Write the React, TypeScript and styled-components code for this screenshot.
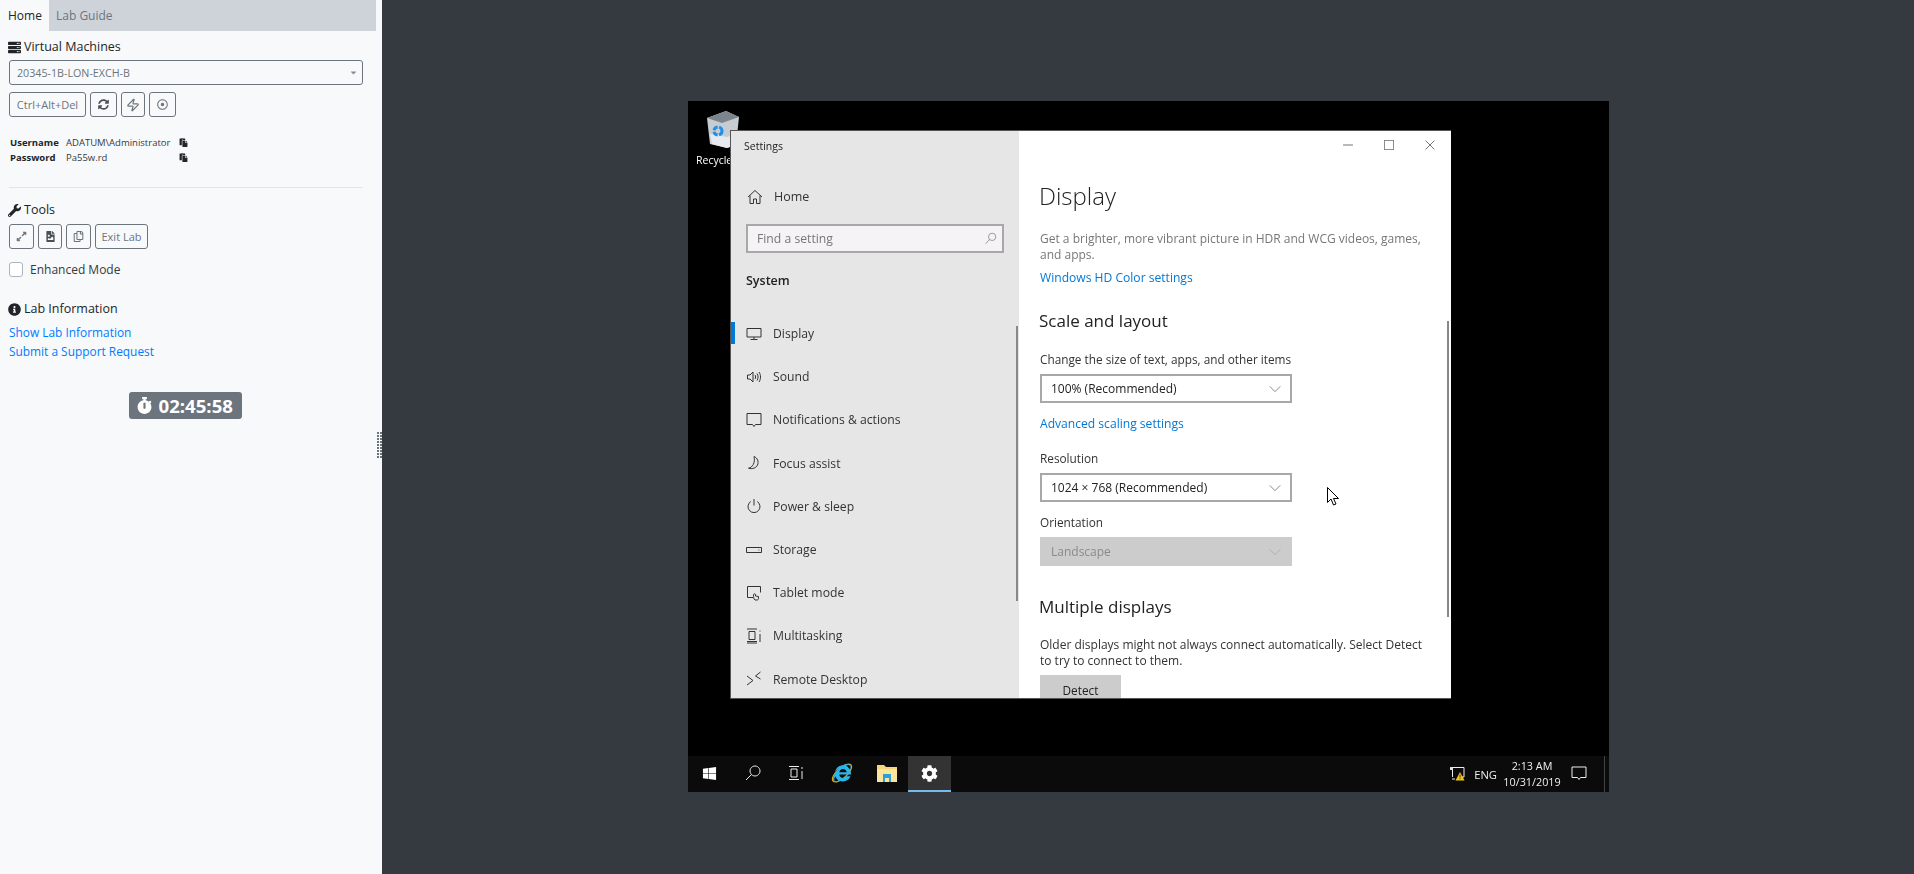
import React from "react";
import styled, { createGlobalStyle } from "styled-components";
import {
  FaServer,
  FaWrench,
  FaInfoCircle,
  FaStopwatch,
  FaSyncAlt,
  FaRegDotCircle,
  FaExpandAlt,
  FaFileImage,
  FaRegCopy,
  FaPaste,
  FaCog,
  FaWindows,
  FaCaretDown,
  FaInternetExplorer,
} from "react-icons/fa";
import { Zap } from "lucide-react";

const GlobalStyle = createGlobalStyle`
  html, body {
    margin: 0;
    height: 100%;
    overflow: hidden;
    background: #343a40;
    font-family: "Open Sans", "Noto Sans", sans-serif;
  }
  * { box-sizing: border-box; }
`;

const Page = styled.div`
  display: flex;
  width: 1914px;
  height: 874px;
`;

/* ---------- left panel ---------- */

const Sidebar = styled.aside`
  position: relative;
  width: 382px;
  flex: none;
  background: #f8f9fa;
  color: #212529;
`;

const Tabs = styled.nav`
  display: flex;
  width: 376px;
  height: 31px;
  background: #ced3da;
`;

const Tab = styled.div<{ $active?: boolean }>`
  width: ${(p) => (p.$active ? "49px" : "auto")};
  padding-left: ${(p) => (p.$active ? "8px" : "7px")};
  line-height: 31px;
  font-size: 12px;
  color: ${(p) => (p.$active ? "#212529" : "#6c757d")};
  background: ${(p) => (p.$active ? "#f8f9fa" : "transparent")};
`;

const SideBody = styled.div`
  display: flex;
  flex-direction: column;
  padding: 0 19px 0 9px;
`;

const Heading = styled.h6<{ $top: number }>`
  display: flex;
  align-items: center;
  gap: 3px;
  margin: ${(p) => p.$top}px 0 0 -1px;
  font-size: 12.5px;
  font-weight: 500;
  line-height: 18px;
  color: #212529;
  svg {
    font-size: 13px;
  }
`;

const SelectBox = styled.div`
  display: flex;
  align-items: center;
  justify-content: space-between;
  height: 25px;
  margin-top: 4px;
  padding: 0 4px 0 7px;
  border: 1px solid #6c757d;
  border-radius: 3px;
  font-size: 10.7px;
  color: #6c757d;
  svg {
    font-size: 9px;
    color: #868e96;
  }
`;

const ButtonRow = styled.div<{ $top: number }>`
  display: flex;
  gap: 4px;
  margin-top: ${(p) => p.$top}px;
`;

const ToolButton = styled.div<{ $w: number }>`
  display: flex;
  align-items: center;
  justify-content: center;
  width: ${(p) => p.$w}px;
  height: 25px;
  border: 1px solid #6c757d;
  border-radius: 3px;
  font-size: 11px;
  color: #6c757d;
  svg {
    font-size: 11px;
  }
`;

const DarkToolButton = styled(ToolButton)`
  color: #495057;
`;

const Creds = styled.div`
  display: grid;
  grid-template-columns: 56px 113px auto;
  margin: 18px 0 0 1px;
  font-size: 9.5px;
  line-height: 15px;
  color: #343a40;
`;

const CredLabel = styled.span`
  font-weight: 700;
  color: #212529;
`;

const CredCopy = styled.span`
  display: flex;
  align-items: center;
  font-size: 9px;
  color: #212529;
`;

const Divider = styled.hr`
  width: 100%;
  margin: 22px 0 0;
  border: 0;
  border-top: 1px solid #e1e4e8;
`;

const CheckRow = styled.label`
  display: flex;
  align-items: center;
  gap: 7px;
  height: 15px;
  margin-top: 13px;
  font-size: 12px;
  color: #343a40;
`;

const CheckBox = styled.span`
  width: 14px;
  height: 15px;
  background: #fff;
  border: 1px solid #adb5bd;
  border-radius: 3px;
`;

const SideLinks = styled.div`
  display: flex;
  flex-direction: column;
  margin: 5px 0 0;
`;

const SideLink = styled.a`
  font-size: 11.9px;
  line-height: 18.5px;
  color: #007bff;
`;

const TimerWrap = styled.div`
  display: flex;
  justify-content: center;
  margin-top: 32px;
  padding-right: 2px;
`;

const Timer = styled.div`
  display: flex;
  align-items: center;
  gap: 6px;
  width: 113px;
  height: 27px;
  padding-left: 7px;
  background: #6c757d;
  border-radius: 3px;
  color: #fff;
  font-size: 18.6px;
  font-weight: 700;
  svg {
    font-size: 17px;
  }
`;

const Grip = styled.div`
  position: absolute;
  right: 0;
  top: 432px;
  display: grid;
  grid-template-columns: repeat(2, 2px);
  gap: 1px;
  span {
    width: 2px;
    height: 2px;
    background: #6c757d;
  }
`;

/* ---------- remote desktop ---------- */

const Stage = styled.main`
  flex: 1;
  display: flex;
  justify-content: flex-start;
  padding: 101px 0 0 306px;
`;

const Screen = styled.div`
  display: flex;
  flex-direction: column;
  width: 921px;
  height: 691px;
  background: #000;
  filter: blur(0.3px);
  font-family: "Open Sans", "Noto Sans", sans-serif;
`;

const Desktop = styled.div`
  position: relative;
  flex: 1;
`;

const DesktopIcon = styled.div`
  position: absolute;
  left: 8px;
  top: 9px;
  display: flex;
  flex-direction: column;
  align-items: flex-start;
  gap: 5px;
  color: #fff;
  font-size: 10.5px;
  svg {
    margin-left: 9px;
  }
`;

const Win = styled.section`
  position: absolute;
  left: 42px;
  top: 29px;
  display: flex;
  width: 721px;
  height: 569px;
  overflow: hidden;
  background: #fff;
  border-top: 1px solid #555;
  border-bottom: 1px solid #555;
  border-left: 1px solid #555;
`;

const Pane = styled.div`
  position: relative;
  flex: none;
  width: 288px;
  background: #e6e6e6;
  color: #333;
`;

const WinTitle = styled.div`
  height: 31px;
  padding-left: 13px;
  font-size: 10.5px;
  line-height: 31px;
  color: #222;
`;

const HomeRow = styled.div`
  display: flex;
  align-items: center;
  height: 43px;
  margin-top: 13px;
  padding-left: 16px;
  font-size: 12.5px;
  color: #333;
  svg {
    margin-right: 11px;
  }
`;

const SearchBox = styled.div`
  display: flex;
  align-items: center;
  justify-content: space-between;
  width: 258px;
  height: 29px;
  margin: 6px 0 0 15px;
  padding: 0 5px 0 9px;
  background: #f5f3f6;
  border: 2px solid #a8a8a8;
  font-size: 12.2px;
  color: #777;
  svg {
    color: #888;
  }
`;

const SysLabel = styled.div`
  margin: 17px 0 0 15px;
  font-size: 12.5px;
  font-weight: 600;
  line-height: 22px;
  color: #222;
`;

const NavList = styled.ul`
  margin: 20px 0 0;
  padding: 0;
  list-style: none;
`;

const NavRow = styled.li<{ $active?: boolean }>`
  position: relative;
  display: flex;
  align-items: center;
  gap: 11px;
  height: 43.2px;
  padding-left: 15px;
  font-size: 12.2px;
  color: #333;
  &::before {
    content: "";
    display: ${(p) => (p.$active ? "block" : "none")};
    position: absolute;
    left: 0;
    top: 10px;
    width: 4px;
    height: 22px;
    background: #0078d7;
  }
`;

const PaneScroll = styled.div`
  position: absolute;
  right: 1px;
  top: 195px;
  width: 2px;
  height: 275px;
  background: #888;
`;

const Content = styled.div`
  position: relative;
  flex: 1;
  padding-left: 21px;
  color: #222;
`;

const Caption = styled.div`
  display: flex;
  justify-content: flex-end;
  height: 28px;
  margin-left: -21px;
  padding-right: 1px;
`;

const CaptionBtn = styled.div`
  display: flex;
  align-items: center;
  justify-content: center;
  width: 41px;
  color: #222;
`;

const PageTitle = styled.h1`
  margin: 19px 0 0 -1px;
  font-size: 24px;
  font-weight: 300;
  line-height: 36px;
  color: #222;
`;

const Muted = styled.p`
  width: 392px;
  margin: 17px 0 0;
  font-size: 12px;
  line-height: 16px;
  color: #777;
`;

const WinLink = styled.a<{ $top: number }>`
  display: block;
  margin-top: ${(p) => p.$top}px;
  font-size: 12.1px;
  line-height: 18px;
  color: #0078d7;
`;

const SubTitle = styled.h2<{ $top: number }>`
  margin: ${(p) => p.$top}px 0 0 -1px;
  font-size: 17px;
  font-weight: 400;
  line-height: 26px;
  color: #222;
`;

const FieldLabel = styled.div<{ $top: number }>`
  margin-top: ${(p) => p.$top}px;
  font-size: 11.8px;
  line-height: 18px;
  color: #333;
`;

const Dropdown = styled.div<{ $disabled?: boolean }>`
  display: flex;
  align-items: center;
  justify-content: space-between;
  width: 252px;
  height: 29px;
  margin-top: 6px;
  padding: 0 8px 0 9px;
  font-size: 12px;
  background: ${(p) => (p.$disabled ? "#ccc" : "#fff")};
  border: 2px solid ${(p) => (p.$disabled ? "#ccc" : "#a8a8a8")};
  color: ${(p) => (p.$disabled ? "#8a8a8a" : "#222")};
  svg {
    color: ${(p) => (p.$disabled ? "#aaa" : "#777")};
  }
`;

const BodyText = styled.p`
  width: 392px;
  margin: 17px 0 0;
  font-size: 12px;
  line-height: 16px;
  color: #333;
`;

const DetectBtn = styled.div`
  display: flex;
  align-items: center;
  justify-content: center;
  width: 81px;
  height: 29px;
  margin-top: 6px;
  background: #ccc;
  font-size: 11.8px;
  color: #222;
`;

const ContentScroll = styled.div`
  position: absolute;
  right: 2px;
  top: 190px;
  width: 2px;
  height: 296px;
  background: #888;
`;

const Pointer = styled.svg`
  position: absolute;
  left: 639px;
  top: 386px;
`;

const Taskbar = styled.footer`
  display: flex;
  align-items: stretch;
  height: 36px;
  background: #0b0b0b;
  color: #eee;
`;

const TaskSlot = styled.div<{ $w: number; $active?: boolean }>`
  display: flex;
  align-items: center;
  justify-content: center;
  width: ${(p) => p.$w}px;
  background: ${(p) => (p.$active ? "#333" : "transparent")};
  border-bottom: 2px solid ${(p) => (p.$active ? "#76b9ed" : "transparent")};
`;

const TaskSpacer = styled.div`
  flex: 1;
`;

const Lang = styled.div`
  display: flex;
  align-items: center;
  padding: 0 2px 0 9px;
  font-size: 11.2px;
`;

const Clock = styled.div`
  display: flex;
  flex-direction: column;
  align-items: center;
  justify-content: center;
  width: 66px;
  font-size: 10.8px;
  line-height: 16px;
`;

const ShowDesktop = styled.div`
  width: 1px;
  margin: 0 4px 0 12px;
  background: #444;
`;

/* ---------- drawn icons ---------- */

const Line = ({ d, size = 16 }: { d: string; size?: number }) => (
  <svg width={size} height={size} viewBox="0 0 16 16" fill="none" stroke="currentColor" strokeWidth="1">
    <path d={d} />
  </svg>
);

const navIcons: Record<string, string> = {
  display: "M1 2.500h14v8.500H1zM8 11v2.500M4.500 13.500h7",
  sound: "M1.500 6h2.500l3-3v10l-3-3H1.500zM9 6c.8 1.200.8 2.800 0 4M11 4.500c1.400 2 1.400 5 0 7M13 3c2 2.800 2 7.200 0 10",
  notify: "M1 1.500h14v11H9.500L8 14.500 6.500 12.500H1z",
  focus: "M8 1.500c3.500 1.500 5 5 3.500 8.500-1.200 2.800-5 4.500-9 3.200 4-.5 7-5.700 5.500-11.700z",
  power: "M8 1v6.500M4.800 3.500a6 6 0 1 0 6.400 0",
  storage: "M.5 5.500h15v5H.5zM12.500 8h.8",
  tablet: "M7 12.500H1.500V1.500h13v6M9 15c-1.500-1-1.500-3-1.500-5 0-1.500 2-1.500 2-.5V11l3 .5V13c0 1-.5 2-1 2z",
  multi: "M1 1h10M1 15h10M3 3.500h6v8H3zM1 13.500h10M14 2.500v1M14 6v8",
  remote: "M1 5l6 4.500-6 4.500M14.500 1L9.500 5l5 3",
};

const NAV = [
  { key: "display", label: "Display", active: true },
  { key: "sound", label: "Sound" },
  { key: "notify", label: "Notifications & actions" },
  { key: "focus", label: "Focus assist" },
  { key: "power", label: "Power & sleep" },
  { key: "storage", label: "Storage" },
  { key: "tablet", label: "Tablet mode" },
  { key: "multi", label: "Multitasking" },
  { key: "remote", label: "Remote Desktop" },
];

const Chevron = () => <Line size={14} d="M2 5l6 6 6-6" />;

const RecycleBin = () => (
  <svg width="36" height="38" viewBox="0 0 36 38">
    <path d="M2 8L21 1l13 6-3 28-9 3-17-4z" fill="#c6ccd2" />
    <path d="M2 8l19-7 13 6-17 6z" fill="#7d858c" />
    <path d="M5 24l17 3 9-3-1 11-8 3-15-4z" fill="#e6eaee" />
    <circle cx="13" cy="21" r="4" fill="none" stroke="#1f8fe8" strokeWidth="3" strokeDasharray="5 1.500" />
  </svg>
);

const IEIcon = () => (
  <svg width="22" height="22" viewBox="0 0 22 22">
    <ellipse cx="11" cy="11" rx="12" ry="5" fill="none" stroke="#d9a520" strokeWidth="1.300" transform="rotate(-42 11 11)" />
    <foreignObject x="2" y="2" width="18" height="18">
      <FaInternetExplorer size={18} color="#29b6ec" />
    </foreignObject>
  </svg>
);

const FolderIcon = () => (
  <svg width="20" height="18" viewBox="0 0 20 18">
    <path d="M0 1h7l2 2h11v15H0z" fill="#f7d774" />
    <path d="M0 5h20v13H0z" fill="#fbe59a" />
    <path d="M6 10h8v8H6z" fill="#2aa0dc" />
    <path d="M8 14h4v4H8z" fill="#fbe59a" />
  </svg>
);

const NetworkIcon = () => (
  <svg width="16" height="15" viewBox="0 0 16 15">
    <path d="M2 1.500h13v9.500H9" fill="none" stroke="#eee" />
    <path d="M1 1h3v3H1z" fill="#ddd" />
    <path d="M3.500 4v7M3 13h3" stroke="#eee" fill="none" />
    <path d="M11 6l4.500 8.500h-9z" fill="#f5c518" />
    <path d="M10.700 8.500h.7v3h-.7zM10.700 12.300h.7v1h-.7z" fill="#000" />
  </svg>
);

export default function App() {
  return (
    <Page>
      <GlobalStyle />
      <Sidebar>
        <Tabs>
          <Tab $active>Home</Tab>
          <Tab>Lab Guide</Tab>
        </Tabs>
        <SideBody>
          <Heading $top={7}>
            <FaServer /> Virtual Machines
          </Heading>
          <SelectBox>
            20345-1B-LON-EXCH-B
            <FaCaretDown />
          </SelectBox>
          <ButtonRow $top={7}>
            <ToolButton $w={77}>Ctrl+Alt+Del</ToolButton>
            <DarkToolButton $w={27}>
              <FaSyncAlt />
            </DarkToolButton>
            <ToolButton $w={24}>
              <Zap size={14} />
            </ToolButton>
            <ToolButton $w={27}>
              <FaRegDotCircle />
            </ToolButton>
          </ButtonRow>
          <Creds>
            <CredLabel>Username</CredLabel>
            <span>ADATUM\Administrator</span>
            <CredCopy>
              <FaPaste />
            </CredCopy>
            <CredLabel>Password</CredLabel>
            <span>Pa55w.rd</span>
            <CredCopy>
              <FaPaste />
            </CredCopy>
          </Creds>
          <Divider />
          <Heading $top={13}>
            <FaWrench /> Tools
          </Heading>
          <ButtonRow $top={5}>
            <ToolButton $w={25}>
              <FaExpandAlt />
            </ToolButton>
            <DarkToolButton $w={24}>
              <FaFileImage />
            </DarkToolButton>
            <ToolButton $w={25}>
              <FaRegCopy />
            </ToolButton>
            <ToolButton $w={53}>Exit Lab</ToolButton>
          </ButtonRow>
          <CheckRow>
            <CheckBox />
            Enhanced Mode
          </CheckRow>
          <Heading $top={23}>
            <FaInfoCircle /> Lab Information
          </Heading>
          <SideLinks>
            <SideLink>Show Lab Information</SideLink>
            <SideLink>Submit a Support Request</SideLink>
          </SideLinks>
          <TimerWrap>
            <Timer>
              <FaStopwatch /> 02:45:58
            </Timer>
          </TimerWrap>
        </SideBody>
        <Grip>
          {Array.from({ length: 18 }).map((_, i) => (
            <span key={i} />
          ))}
        </Grip>
      </Sidebar>

      <Stage>
        <Screen>
          <Desktop>
            <DesktopIcon>
              <RecycleBin />
              <span>Recycle Bin</span>
            </DesktopIcon>
            <Win>
              <Pane>
                <WinTitle>Settings</WinTitle>
                <HomeRow>
                  <Line d="M1 8l7-6.500L15 8M3 6.500V14.500h3.500V10h3v4.500H13V6.500" />
                  Home
                </HomeRow>
                <SearchBox>
                  Find a setting
                  <Line size={13} d="M14.500 6a4.500 4.500 0 1 1-9 0 4.500 4.500 0 1 1 9 0zM6.800 9.200L2 14.500" />
                </SearchBox>
                <SysLabel>System</SysLabel>
                <NavList>
                  {NAV.map((n) => (
                    <NavRow key={n.key} $active={n.active}>
                      <Line d={navIcons[n.key]} />
                      {n.label}
                    </NavRow>
                  ))}
                </NavList>
                <PaneScroll />
              </Pane>
              <Content>
                <Caption>
                  <CaptionBtn>
                    <Line size={10} d="M0 8h16" />
                  </CaptionBtn>
                  <CaptionBtn>
                    <Line size={10} d="M.5.500h15v15H.5z" />
                  </CaptionBtn>
                  <CaptionBtn>
                    <Line size={10} d="M1 1l14 14M15 1L1 15" />
                  </CaptionBtn>
                </Caption>
                <PageTitle>Display</PageTitle>
                <Muted>Get a brighter, more vibrant picture in HDR and WCG videos, games, and apps.</Muted>
                <WinLink $top={6}>Windows HD Color settings</WinLink>
                <SubTitle $top={21}>Scale and layout</SubTitle>
                <FieldLabel $top={16}>Change the size of text, apps, and other items</FieldLabel>
                <Dropdown>
                  100% (Recommended)
                  <Chevron />
                </Dropdown>
                <WinLink $top={12}>Advanced scaling settings</WinLink>
                <FieldLabel $top={16}>Resolution</FieldLabel>
                <Dropdown>
                  1024 × 768 (Recommended)
                  <Chevron />
                </Dropdown>
                <FieldLabel $top={11}>Orientation</FieldLabel>
                <Dropdown $disabled>
                  Landscape
                  <Chevron />
                </Dropdown>
                <SubTitle $top={28}>Multiple displays</SubTitle>
                <BodyText>Older displays might not always connect automatically. Select Detect to try to connect to them.</BodyText>
                <DetectBtn>Detect</DetectBtn>
                <ContentScroll />
              </Content>
            </Win>
            <Pointer width="12" height="19" viewBox="0 0 12 19">
              <path d="M.5.500v15l3.500-3.500 2.500 6 2.500-1-2.500-5.500h5z" fill="#fff" stroke="#000" />
            </Pointer>
          </Desktop>
          <Taskbar>
            <TaskSlot $w={43}>
              <FaWindows size={15} color="#fff" />
            </TaskSlot>
            <TaskSlot $w={44}>
              <Line d="M10 1a5 5 0 1 0 .01 0M6.500 9.500L1 15" />
            </TaskSlot>
            <TaskSlot $w={44}>
              <Line d="M0 1.500h10M0 14.500h10M2 4h6v8H2zM13 2v2M13 6v8" />
            </TaskSlot>
            <TaskSlot $w={46}>
              <IEIcon />
            </TaskSlot>
            <TaskSlot $w={43}>
              <FolderIcon />
            </TaskSlot>
            <TaskSlot $w={43} $active>
              <FaCog size={17} color="#fff" />
            </TaskSlot>
            <TaskSpacer />
            <TaskSlot $w={16}>
              <NetworkIcon />
            </TaskSlot>
            <Lang>ENG</Lang>
            <Clock>
              <span>2:13 AM</span>
              <span>10/31/2019</span>
            </Clock>
            <TaskSlot $w={27}>
              <Line d="M1 2h14v10.500H9.500L8 14.500 6.500 12.500H1z" />
            </TaskSlot>
            <ShowDesktop />
          </Taskbar>
        </Screen>
      </Stage>
    </Page>
  );
}
